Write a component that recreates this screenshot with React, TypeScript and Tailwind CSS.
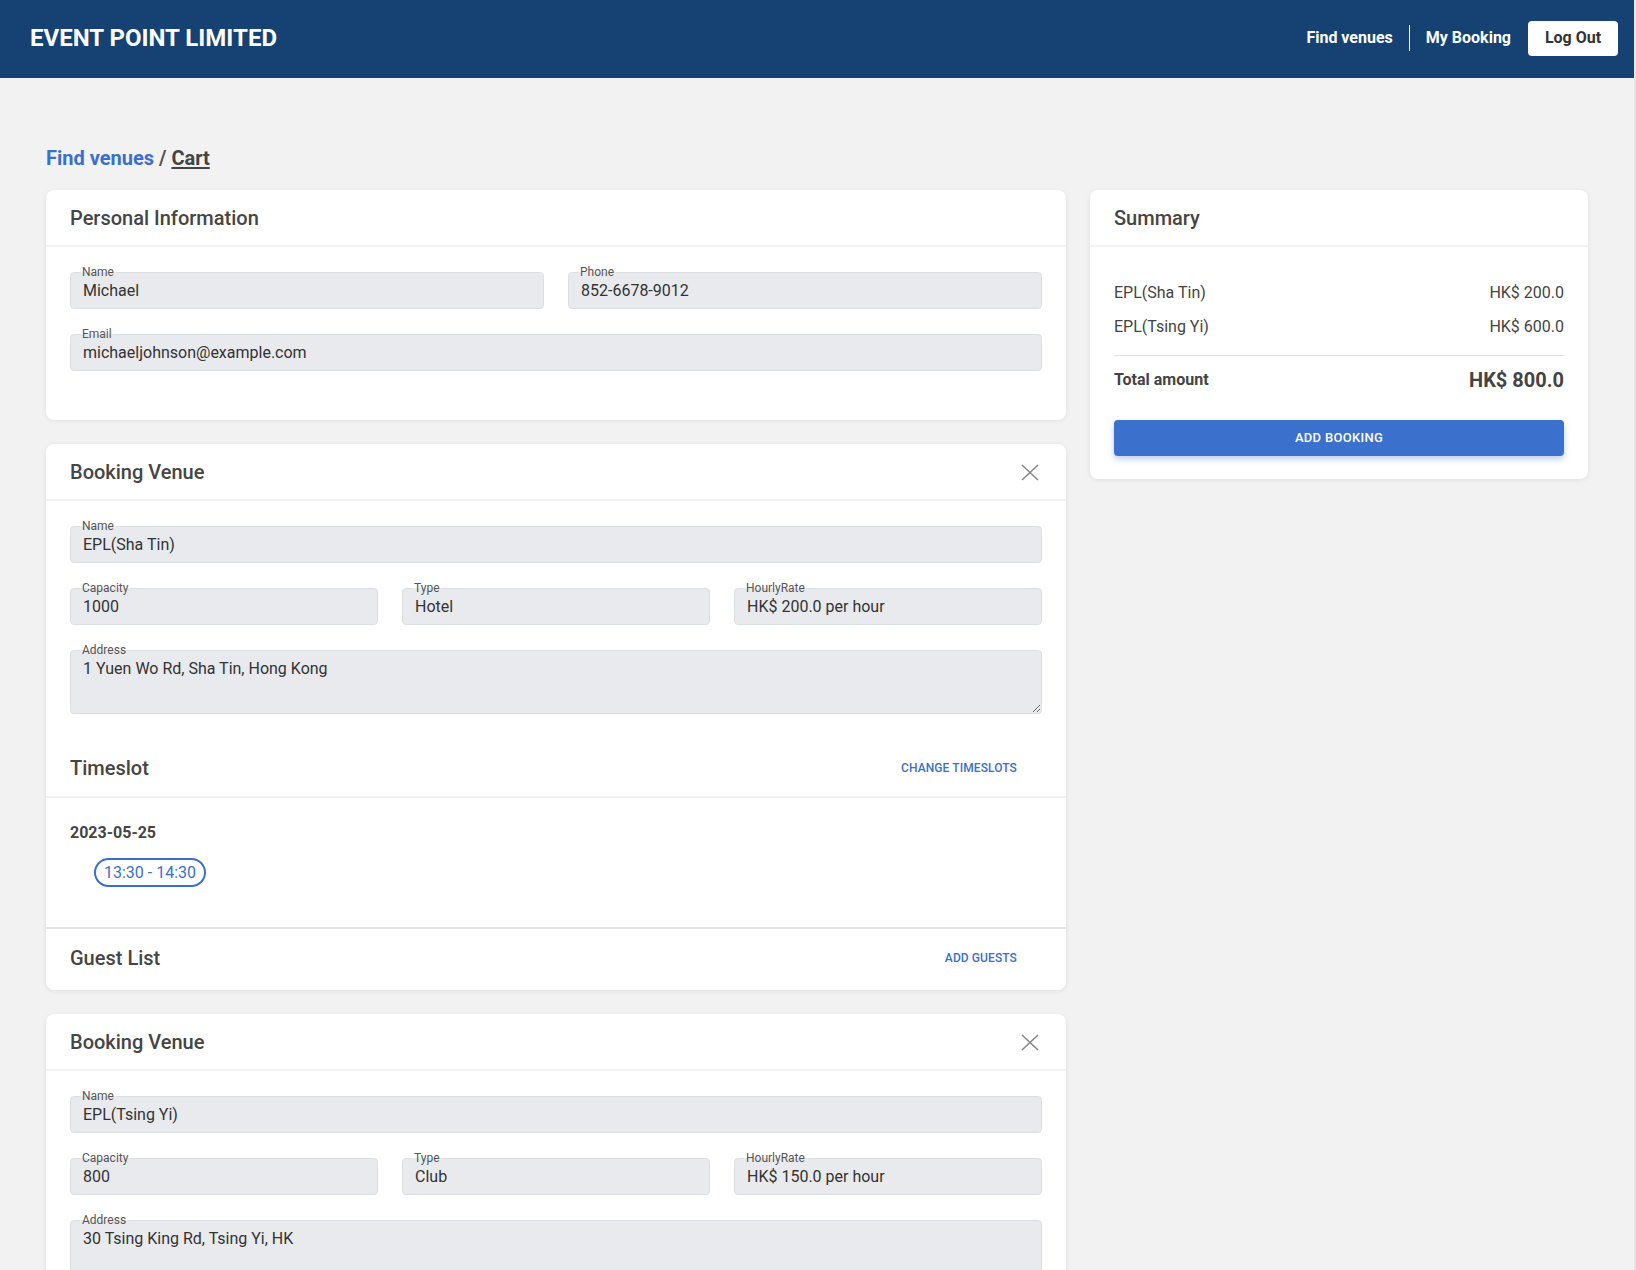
import React from "react";

const FONT = { fontFamily: "Roboto, 'Noto Sans', 'Liberation Sans', sans-serif" };

function Field({ label, value }: { label: string; value: string }) {
  return (
    <div className="relative">
      <span className="absolute -top-[6px] left-[10px] px-[2px] text-[12px] leading-[12px] text-[#555] bg-[linear-gradient(to_bottom,#ffffff_6px,#e8eaed_6px)]">
        {label}
      </span>
      <div className="h-[37px] rounded bg-[#e8eaed] border border-[#dcdfe2] flex items-center px-3 text-[16px] leading-6 text-[#333]">
        {value}
      </div>
    </div>
  );
}

function AreaField({ label, value }: { label: string; value: string }) {
  return (
    <div className="relative">
      <span className="absolute -top-[6px] left-[10px] z-10 px-[2px] text-[12px] leading-[12px] text-[#555] bg-[linear-gradient(to_bottom,#ffffff_6px,#e8eaed_6px)]">
        {label}
      </span>
      <textarea
        readOnly
        value={value}
        className="block w-full h-[64px] rounded bg-[#e8eaed] border border-[#dcdfe2] px-3 pt-[6px] text-[16px] leading-6 text-[#333] outline-none"
        style={FONT}
      />
    </div>
  );
}

function CloseIcon() {
  return (
    <svg width="18" height="17" viewBox="0 0 18 17" className="block">
      <line x1="1" y1="1" x2="17" y2="16" stroke="#888" strokeWidth="1.6" />
      <line x1="17" y1="1" x2="1" y2="16" stroke="#888" strokeWidth="1.6" />
    </svg>
  );
}

function CardHeader({ title, close }: { title: string; close?: boolean }) {
  return (
    <div className="h-[57px] border-b-2 border-[#f3f3f3] px-6 pt-[1px] flex items-center justify-between">
      <div className="text-[20px] leading-7 font-medium text-[#454545]">{title}</div>
      {close && (
        <div className="mr-[3px]">
          <CloseIcon />
        </div>
      )}
    </div>
  );
}

type Venue = {
  name: string;
  capacity: string;
  type: string;
  rate: string;
  address: string;
  date: string;
  slots: string[];
};

function VenueCard({ v }: { v: Venue }) {
  return (
    <div className="bg-white rounded-lg shadow-[0_1px_5px_rgba(0,0,0,0.08)]">
      <CardHeader title="Booking Venue" close />
      <div className="px-6 pt-[25px] flex flex-col gap-y-[25px]">
        <Field label="Name" value={v.name} />
        <div className="grid grid-cols-3 gap-x-6">
          <Field label="Capacity" value={v.capacity} />
          <Field label="Type" value={v.type} />
          <Field label="HourlyRate" value={v.rate} />
        </div>
        <AreaField label="Address" value={v.address} />
      </div>
      <div className="pl-6 pr-[49px] pt-[40px] pb-[14px] border-b-2 border-[#f3f3f3] flex items-center justify-between">
        <div className="text-[20px] leading-7 font-medium text-[#454545]">Timeslot</div>
        <div className="text-[12px] font-medium tracking-[0.1px] text-[#3a6fce]">CHANGE TIMESLOTS</div>
      </div>
      <div className="px-6 pt-[23px] pb-[40px]">
        <div className="text-[16px] leading-6 font-bold text-[#454545]">{v.date}</div>
        <div className="mt-[13px] ml-6 flex gap-3">
          {v.slots.map((s) => (
            <span
              key={s}
              className="inline-flex h-[29px] items-center rounded-full border-2 border-[#3b6fcc] px-[8px] text-[16px] text-[#3b6fcc]"
            >
              {s}
            </span>
          ))}
        </div>
      </div>
      <div className="h-[63px] pb-[3px] border-t-2 border-[#e3e3e3] pl-6 pr-[49px] flex items-center justify-between">
        <div className="text-[20px] leading-7 font-medium text-[#454545]">Guest List</div>
        <div className="text-[12px] font-medium tracking-[0.1px] text-[#3a6fce]">ADD GUESTS</div>
      </div>
    </div>
  );
}

const venues: Venue[] = [
  {
    name: "EPL(Sha Tin)",
    capacity: "1000",
    type: "Hotel",
    rate: "HK$ 200.0 per hour",
    address: "1 Yuen Wo Rd, Sha Tin, Hong Kong",
    date: "2023-05-25",
    slots: ["13:30 - 14:30"],
  },
  {
    name: "EPL(Tsing Yi)",
    capacity: "800",
    type: "Club",
    rate: "HK$ 150.0 per hour",
    address: "30 Tsing King Rd, Tsing Yi, HK",
    date: "2023-05-25",
    slots: ["09:30 - 10:30", "10:30 - 11:30", "11:30 - 12:30", "12:30 - 13:30"],
  },
];

export default function App() {
  return (
    <div className="min-h-screen flex bg-[#f2f2f2]" style={FONT}>
      <div className="flex-1 min-w-0">
        <header className="h-[78px] bg-[#154273] flex items-center justify-between pl-[30px] pr-4 pb-[2px]">
          <div className="text-[24px] font-bold text-white -mt-[1px]">EVENT POINT LIMITED</div>
          <nav className="flex items-center">
            <span className="text-[16px] font-bold text-white">Find venues</span>
            <span className="mx-[16px] w-px h-[26px] bg-white" />
            <span className="text-[16px] font-bold text-white">My Booking</span>
            <button className="ml-[17px] h-[35px] w-[90px] rounded bg-white text-[16px] font-bold text-[#333]">
              Log Out
            </button>
          </nav>
        </header>

        <main className="px-[46px] pt-[68px] pb-10">
          <div className="text-[20px] leading-6 font-bold mb-5">
            <span className="text-[#3a6fce]">Find venues</span>
            <span className="text-[#555]"> / </span>
            <span className="text-[#444] underline underline-offset-2">Cart</span>
          </div>

          <div className="flex gap-6 items-start">
            <div className="flex-1 min-w-0 flex flex-col gap-6">
              <div className="bg-white rounded-lg shadow-[0_1px_5px_rgba(0,0,0,0.08)]">
                <CardHeader title="Personal Information" />
                <div className="px-6 pt-[25px] pb-[49px] flex flex-col gap-y-[25px]">
                  <div className="grid grid-cols-2 gap-x-6">
                    <Field label="Name" value="Michael" />
                    <Field label="Phone" value="852-6678-9012" />
                  </div>
                  <Field label="Email" value="michaeljohnson@example.com" />
                </div>
              </div>
              {venues.map((v) => (
                <VenueCard key={v.name} v={v} />
              ))}
            </div>

            <div className="w-[498px] shrink-0 bg-white rounded-lg shadow-[0_1px_5px_rgba(0,0,0,0.08)]">
              <CardHeader title="Summary" />
              <div className="px-6 pt-[34px] pb-[23px]">
                <div className="flex justify-between text-[16px] leading-6 text-[#444]">
                  <span>EPL(Sha Tin)</span>
                  <span>HK$ 200.0</span>
                </div>
                <div className="mt-[10px] flex justify-between text-[16px] leading-6 text-[#444]">
                  <span>EPL(Tsing Yi)</span>
                  <span>HK$ 600.0</span>
                </div>
                <div className="mt-[16px] h-px bg-[#e0e0e0]" />
                <div className="mt-[10px] h-7 flex items-center justify-between text-[#444]">
                  <span className="text-[16px] font-bold">Total amount</span>
                  <span className="text-[20px] font-bold">HK$ 800.0</span>
                </div>
                <button className="mt-[26px] w-full h-[36px] rounded bg-[#3b70cc] text-white text-[13px] font-medium tracking-[0.3px] shadow-[0_3px_6px_rgba(59,112,204,0.35)]">
                  ADD BOOKING
                </button>
              </div>
            </div>
          </div>
        </main>
      </div>
      <div className="w-[2px] shrink-0 bg-[#e6e6e6]" />
    </div>
  );
}
